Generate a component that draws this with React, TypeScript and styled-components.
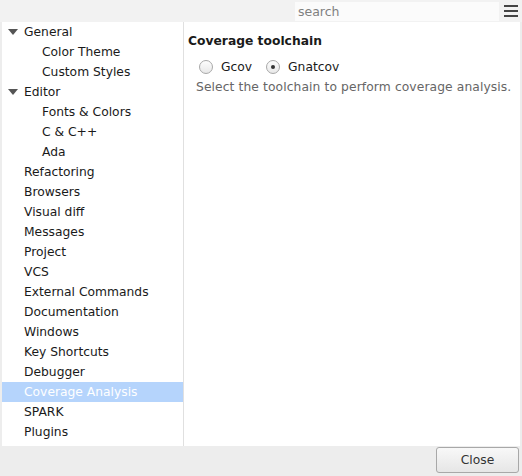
import React from "react";
import styled, { createGlobalStyle } from "styled-components";

const Global = createGlobalStyle`
  html, body { margin: 0; padding: 0; background: #ededed; }
  body { font-family: "DejaVu Sans", sans-serif; font-size: 12.3px; color: #1a1a1a; }
  * { box-sizing: border-box; }
`;

const Window = styled.div`
  width: 522px;
  height: 476px;
  display: flex;
  flex-direction: column;
  background: #ededed;
`;

const TopBar = styled.div`
  height: 22px;
  display: flex;
  align-items: center;
  justify-content: flex-end;
  background: #f2f2f2;
  padding-right: 4px;
`;

const Search = styled.div`
  width: 204px;
  height: 19px;
  background: #fbfbfb;
  color: #808080;
  font-size: 12.5px;
  line-height: 19px;
  padding-left: 3px;
`;

const Menu = styled.svg`
  width: 14px;
  height: 12px;
  margin-left: 5px;
`;

const Body = styled.div`
  flex: 1;
  display: flex;
  padding-left: 2px;
  padding-right: 2px;
  min-height: 0;
`;

const Tree = styled.div`
  width: 181px;
  background: #ffffff;
  display: flex;
  flex-direction: column;
`;

const Row = styled.div<{ $level: number; $selected?: boolean }>`
  height: 20px;
  display: flex;
  align-items: center;
  padding-left: ${(p) => (p.$level === 0 ? 22 : 40)}px;
  background: ${(p) => (p.$selected ? "#b5d4fc" : "transparent")};
  color: ${(p) => (p.$selected ? "#ffffff" : "#1a1a1a")};
  position: relative;
  white-space: nowrap;
`;

const Arrow = styled.span`
  position: absolute;
  left: 6px;
  top: 7px;
  width: 0;
  height: 0;
  border-left: 5px solid transparent;
  border-right: 5px solid transparent;
  border-top: 6px solid #555;
`;

const Splitter = styled.div`
  width: 2px;
  background: #ffffff;
  border-left: 1px solid #e0e0e0;
`;

const Page = styled.div`
  flex: 1;
  background: #ffffff;
  padding: 12px 0 0 3px;
`;

const Heading = styled.div`
  font-weight: bold;
  color: #1a1a1a;
  height: 16px;
`;

const Radios = styled.div`
  display: flex;
  align-items: center;
  gap: 14px;
  margin-top: 10px;
  padding-left: 11px;
`;

const RadioLabel = styled.label`
  display: flex;
  align-items: center;
  gap: 8px;
  color: #1a1a1a;
`;

const Circle = styled.span<{ $on?: boolean }>`
  width: 14px;
  height: 14px;
  border-radius: 50%;
  border: 1px solid #a8a8a8;
  background: linear-gradient(#fdfdfd, #e8e8e8);
  display: flex;
  align-items: center;
  justify-content: center;
  &::after {
    content: "";
    width: 4px;
    height: 4px;
    border-radius: 50%;
    background: ${(p) => (p.$on ? "#333" : "transparent")};
  }
`;

const Hint = styled.div`
  color: #666;
  margin-top: 6px;
  padding-left: 8px;
  white-space: nowrap;
  letter-spacing: 0.1px;
`;

const Footer = styled.div`
  height: 30px;
  display: flex;
  justify-content: flex-end;
  align-items: flex-start;
  padding: 1px 3px 0 0;
`;

const Button = styled.button`
  width: 83px;
  height: 26px;
  border: 1px solid #a8a8a8;
  border-radius: 3px;
  background: linear-gradient(#f8f8f8, #e6e6e6);
  font-family: "DejaVu Sans", sans-serif;
  font-size: 12.3px;
  color: #333;
`;

const items: { label: string; level: number; arrow?: boolean; selected?: boolean }[] = [
  { label: "General", level: 0, arrow: true },
  { label: "Color Theme", level: 1 },
  { label: "Custom Styles", level: 1 },
  { label: "Editor", level: 0, arrow: true },
  { label: "Fonts & Colors", level: 1 },
  { label: "C & C++", level: 1 },
  { label: "Ada", level: 1 },
  { label: "Refactoring", level: 0 },
  { label: "Browsers", level: 0 },
  { label: "Visual diff", level: 0 },
  { label: "Messages", level: 0 },
  { label: "Project", level: 0 },
  { label: "VCS", level: 0 },
  { label: "External Commands", level: 0 },
  { label: "Documentation", level: 0 },
  { label: "Windows", level: 0 },
  { label: "Key Shortcuts", level: 0 },
  { label: "Debugger", level: 0 },
  { label: "Coverage Analysis", level: 0, selected: true },
  { label: "SPARK", level: 0 },
  { label: "Plugins", level: 0 },
];

export default function App() {
  return (
    <>
      <Global />
      <Window>
        <TopBar>
          <Search>search</Search>
          <Menu viewBox="0 0 14 12">
            <rect x="0" y="0" width="14" height="2" fill="#444" />
            <rect x="0" y="5" width="14" height="2" fill="#444" />
            <rect x="0" y="10" width="14" height="2" fill="#444" />
          </Menu>
        </TopBar>
        <Body>
          <Tree>
            {items.map((it) => (
              <Row key={it.label} $level={it.level} $selected={it.selected}>
                {it.arrow && <Arrow />}
                {it.label}
              </Row>
            ))}
          </Tree>
          <Splitter />
          <Page>
            <Heading>Coverage toolchain</Heading>
            <Radios>
              <RadioLabel>
                <Circle />
                Gcov
              </RadioLabel>
              <RadioLabel>
                <Circle $on />
                Gnatcov
              </RadioLabel>
            </Radios>
            <Hint>Select the toolchain to perform coverage analysis.</Hint>
          </Page>
        </Body>
        <Footer>
          <Button>Close</Button>
        </Footer>
      </Window>
    </>
  );
}
